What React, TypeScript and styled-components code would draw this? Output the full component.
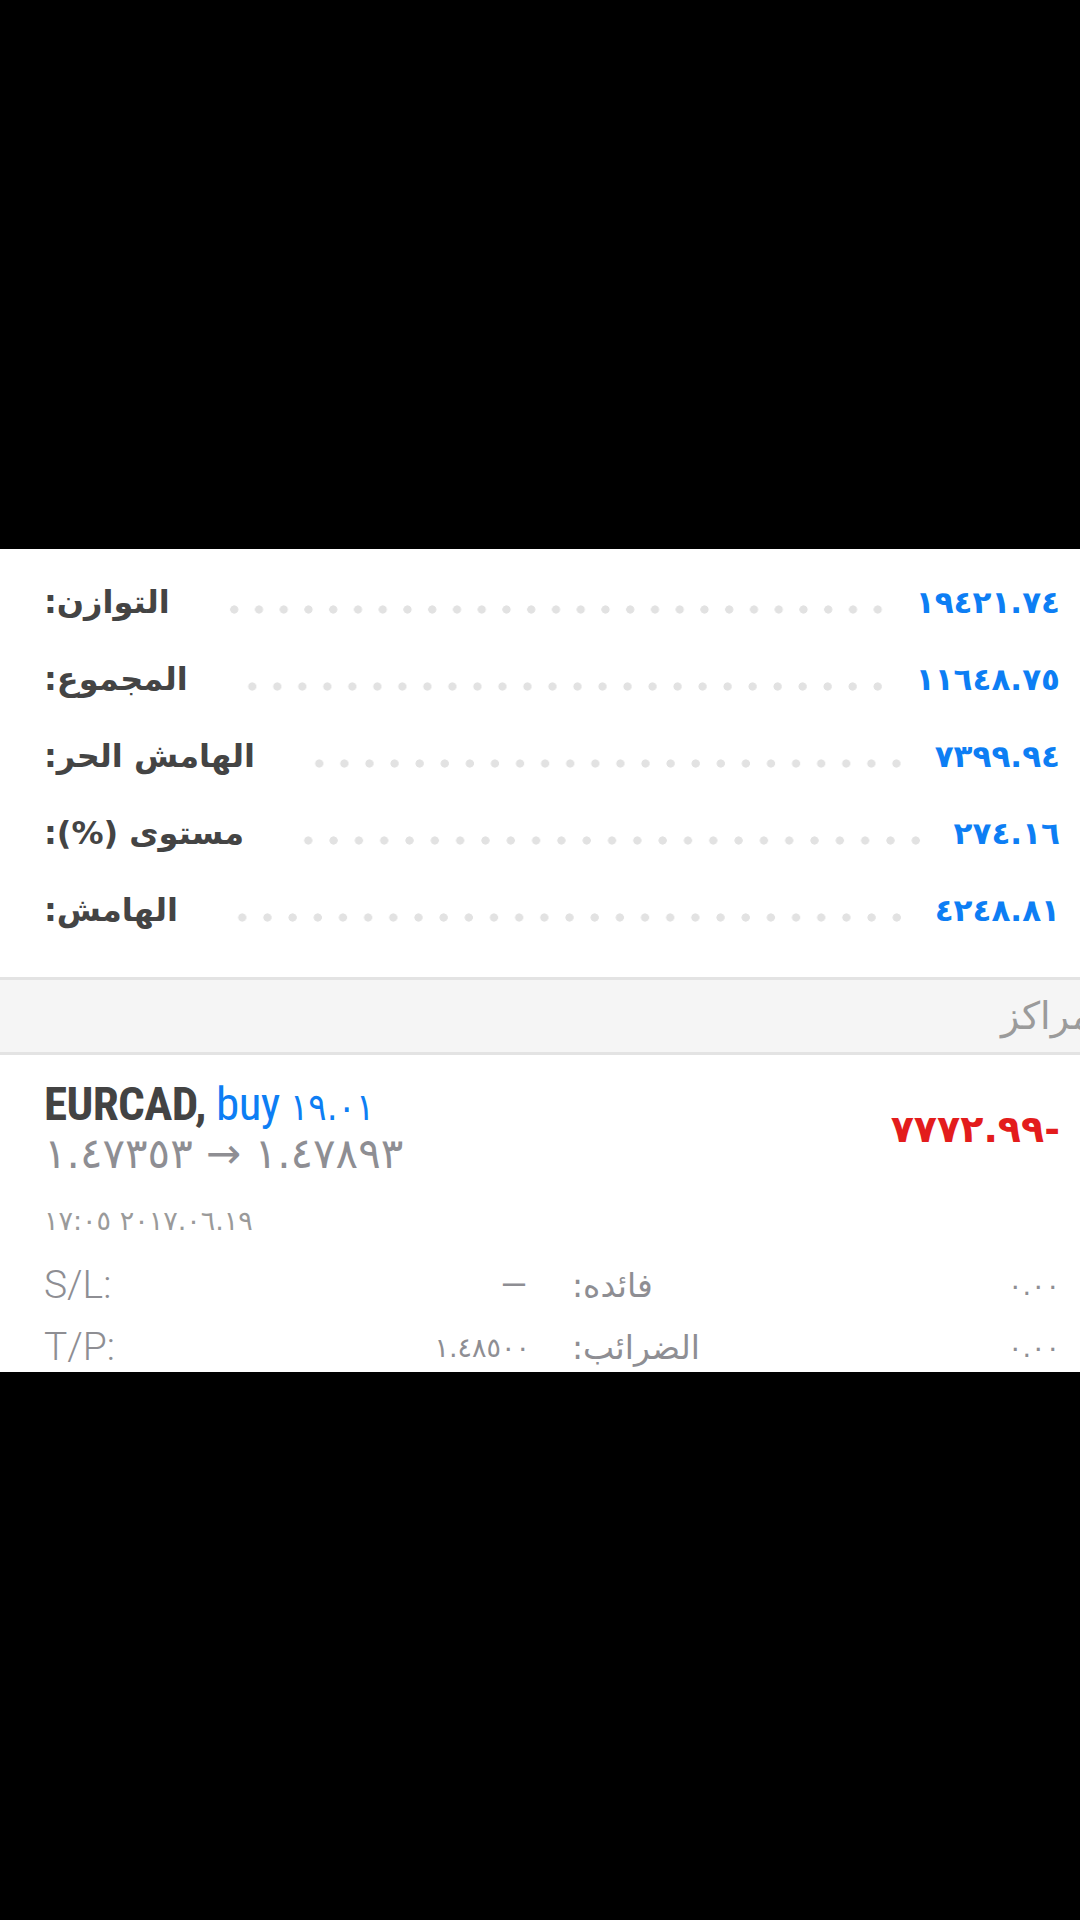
import React from "react";
import styled, { createGlobalStyle } from "styled-components";

const GlobalStyle = createGlobalStyle`
  html, body {
    margin: 0;
    padding: 0;
    background: #000000;
  }
  body {
    font-family: Roboto, "DejaVu Sans", sans-serif;
  }
`;

const Page = styled.div`
  width: 1080px;
  min-height: 1920px;
  padding-top: 549px;
  box-sizing: border-box;
  background: #000000;
`;

const Screen = styled.div`
  height: 823px;
  background: #ffffff;
  overflow: hidden;
`;

const Summary = styled.div`
  padding: 14px 20px 29px 44px;
`;

const SummaryRow = styled.div`
  display: flex;
  align-items: center;
  height: 77px;
`;

const Label = styled.span`
  direction: rtl;
  font-family: "DejaVu Sans", sans-serif;
  font-weight: bold;
  font-size: 32px;
  color: #444444;
  white-space: nowrap;
`;

const Leader = styled.span`
  flex: 1;
  height: 9px;
  margin: 16px 26px 0 52px;
  background-image: radial-gradient(circle, #e2e2e2 3.8px, transparent 4.4px);
  background-size: 24.5px 9px;
  background-position: right center;
  background-repeat: space no-repeat;
`;

const Num = styled.span`
  unicode-bidi: bidi-override;
  direction: ltr;
  white-space: nowrap;
`;

const Amount = styled(Num)`
  font-family: "DejaVu Sans", sans-serif;
  font-weight: bold;
  font-size: 31px;
  letter-spacing: -2px;
  color: #0d7ef4;
`;

const SectionHeader = styled.div`
  display: flex;
  align-items: center;
  justify-content: flex-end;
  height: 72px;
  background: #f5f5f5;
  border-top: 3px solid #e3e3e3;
  border-bottom: 3px solid #e3e3e3;
  overflow: hidden;
`;

const SectionTitle = styled.span`
  direction: rtl;
  margin-right: -12px;
  font-family: "DejaVu Sans", sans-serif;
  font-size: 38px;
  color: #9b9b9b;
`;

const Position = styled.div`
  padding: 25px 20px 0 44px;
`;

const PositionHead = styled.div`
  display: flex;
  align-items: center;
  justify-content: space-between;
`;

const Title = styled.div`
  font-family: "Roboto Condensed", "Liberation Sans Narrow", Roboto, sans-serif;
  font-stretch: condensed;
  font-weight: bold;
  font-size: 47px;
  line-height: 48px;
  letter-spacing: -0.6px;
  color: #434343;
`;

const Side = styled.span`
  font-weight: normal;
  color: #0d7ef4;
`;

const Volume = styled(Num)`
  font-family: "DejaVu Sans", sans-serif;
  font-weight: normal;
  font-size: 38px;
  letter-spacing: -1px;
  color: #0d7ef4;
`;

const Prices = styled(Num)`
  display: block;
  font-family: "DejaVu Sans", sans-serif;
  font-size: 42px;
  line-height: 46px;
  letter-spacing: -1px;
  color: #8e8e93;
`;

const Profit = styled(Num)`
  font-family: "DejaVu Sans", sans-serif;
  font-weight: bold;
  font-size: 38px;
  letter-spacing: -2px;
  color: #e31c1c;
`;

const OpenTime = styled(Num)`
  display: block;
  margin-top: 28px;
  font-family: "DejaVu Sans", sans-serif;
  font-size: 27px;
  letter-spacing: -0.5px;
  color: #9a9a9a;
`;

const Details = styled.div`
  display: grid;
  grid-template-columns: 486px 1fr;
  column-gap: 42px;
  margin-top: 18px;
`;

const DetailCell = styled.div`
  display: flex;
  align-items: center;
  justify-content: space-between;
  height: 62px;
`;

const DetailKey = styled.span<{ $rtl?: boolean }>`
  direction: ${(p) => (p.$rtl ? "rtl" : "ltr")};
  font-family: ${(p) => (p.$rtl ? '"DejaVu Sans", sans-serif' : "Roboto, sans-serif")};
  font-weight: ${(p) => (p.$rtl ? 400 : 300)};
  font-size: ${(p) => (p.$rtl ? "33px" : "39px")};
  color: #8e8e93;
  white-space: nowrap;
`;

const DetailValue = styled(Num)`
  font-family: "DejaVu Sans", sans-serif;
  font-size: 27px;
  color: #8e8e93;
`;

const Dash = styled.span`
  font-family: Roboto, sans-serif;
  font-size: 34px;
  color: #8e8e93;
  margin-right: 3px;
`;

const summary = [
  { label: "التوازن:", value: "١٩٤٢١.٧٤" },
  { label: "المجموع:", value: "١١٦٤٨.٧٥" },
  { label: "الهامش الحر:", value: "٧٣٩٩.٩٤" },
  { label: "مستوى (%):", value: "٢٧٤.١٦" },
  { label: "الهامش:", value: "٤٢٤٨.٨١" },
];

const App: React.FC = () => {
  return (
    <>
      <GlobalStyle />
      <Page>
        <Screen>
          <Summary>
            {summary.map((row) => (
              <SummaryRow key={row.label}>
                <Label>{row.label}</Label>
                <Leader />
                <Amount>{row.value}</Amount>
              </SummaryRow>
            ))}
          </Summary>
          <SectionHeader>
            <SectionTitle>مراكز</SectionTitle>
          </SectionHeader>
          <Position>
            <PositionHead>
              <div>
                <Title>
                  EURCAD, <Side>buy</Side> <Volume>١٩.٠١</Volume>
                </Title>
                <Prices>١.٤٧٣٥٣ → ١.٤٧٨٩٣</Prices>
              </div>
              <Profit>٧٧٧٢.٩٩-</Profit>
            </PositionHead>
            <OpenTime>١٧:٠٥ ٢٠١٧.٠٦.١٩</OpenTime>
            <Details>
              <DetailCell>
                <DetailKey>S/L:</DetailKey>
                <Dash>—</Dash>
              </DetailCell>
              <DetailCell>
                <DetailKey $rtl>فائده:</DetailKey>
                <DetailValue>٠.٠٠</DetailValue>
              </DetailCell>
              <DetailCell>
                <DetailKey>T/P:</DetailKey>
                <DetailValue>١.٤٨٥٠٠</DetailValue>
              </DetailCell>
              <DetailCell>
                <DetailKey $rtl>الضرائب:</DetailKey>
                <DetailValue>٠.٠٠</DetailValue>
              </DetailCell>
            </Details>
          </Position>
        </Screen>
      </Page>
    </>
  );
};

export default App;
